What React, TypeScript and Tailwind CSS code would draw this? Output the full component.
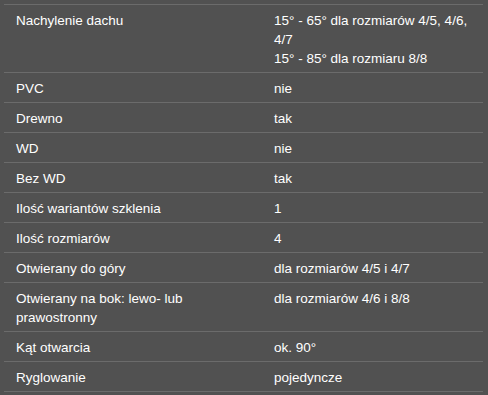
const ROWS: { label: string; value: React.ReactNode }[] = [
  {
    label: "Nachylenie dachu",
    value: (
      <>
        15° - 65° dla rozmiarów 4/5, 4/6, 4/7
        <br />
        15° - 85° dla rozmiaru 8/8
      </>
    ),
  },
  { label: "PVC", value: "nie" },
  { label: "Drewno", value: "tak" },
  { label: "WD", value: "nie" },
  { label: "Bez WD", value: "tak" },
  { label: "Ilość wariantów szklenia", value: "1" },
  { label: "Ilość rozmiarów", value: "4" },
  { label: "Otwierany do góry", value: "dla rozmiarów 4/5 i 4/7" },
  { label: "Otwierany na bok: lewo- lub prawostronny", value: "dla rozmiarów 4/6 i 8/8" },
  { label: "Kąt otwarcia", value: "ok. 90°" },
  { label: "Ryglowanie", value: "pojedyncze" },
];

export default function App() {
  return (
    <div
      className="w-[488px] h-[395px] bg-[#515151] pt-[4px] pl-[4px] pr-[5px] text-white text-[13.5px] leading-[19px] overflow-hidden"
      style={{ fontFamily: '"Liberation Sans", Arial, sans-serif' }}
    >
      <div className="border-b border-[#6b6b6b]">
        {ROWS.map((row) => (
          <div
            key={row.label}
            className="grid grid-cols-[258px_1fr] border-t border-[#6b6b6b]"
          >
            <div className="px-3 pt-[6px] pb-[4px]">{row.label}</div>
            <div className="px-3 pt-[6px] pb-[4px]">{row.value}</div>
          </div>
        ))}
      </div>
    </div>
  );
}
